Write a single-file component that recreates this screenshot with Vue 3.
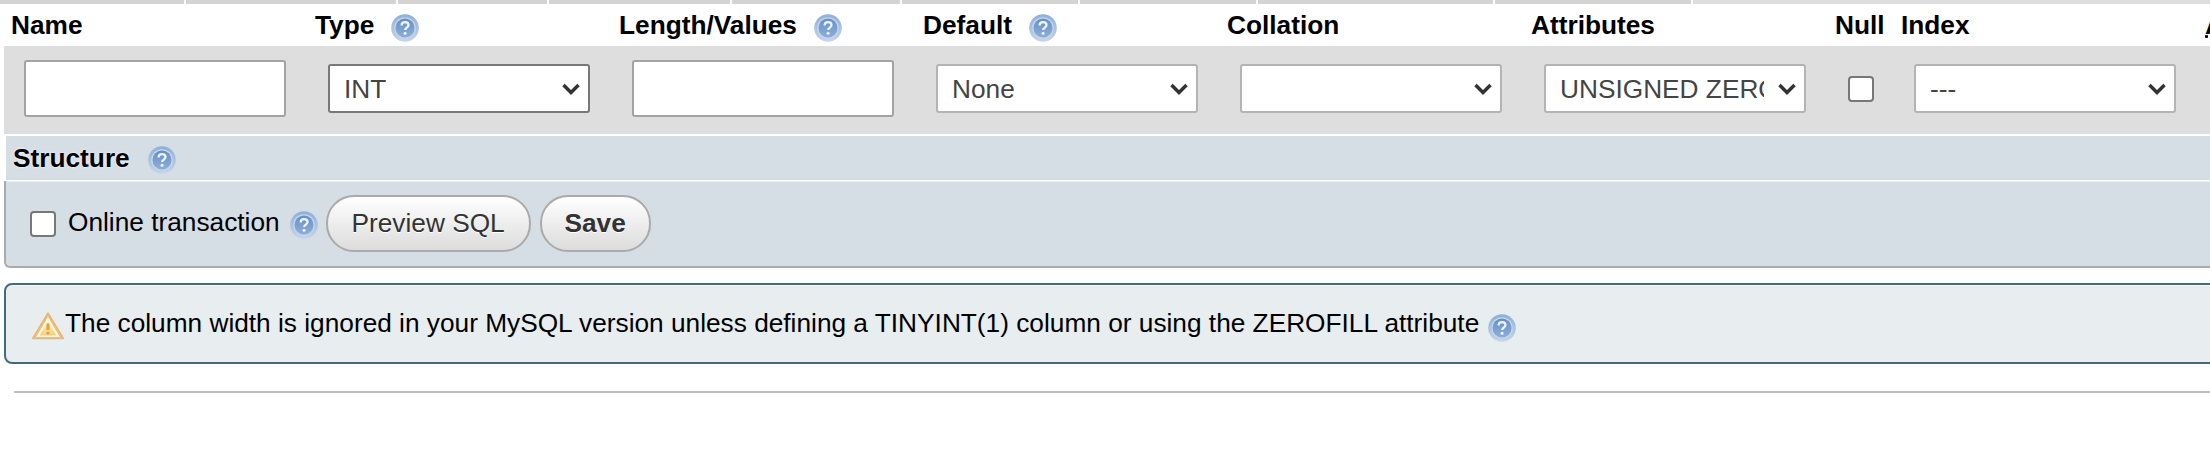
<template>
  <div class="page">
    <!-- shared help icon -->
    <svg class="icon-defs" width="0" height="0" aria-hidden="true">
      <defs>
        <linearGradient id="helpFill" x1="0" y1="0" x2="0" y2="1">
          <stop offset="0" stop-color="#6690c4" />
          <stop offset="1" stop-color="#8dafd8" />
        </linearGradient>
        <linearGradient id="helpRing" x1="0" y1="0" x2="0" y2="1">
          <stop offset="0" stop-color="#8fafd6" />
          <stop offset="1" stop-color="#c4d6eb" />
        </linearGradient>
      </defs>
      <symbol id="help" viewBox="0 0 28 28">
        <circle cx="14" cy="14" r="13.800" fill="url(#helpRing)" />
        <circle cx="14" cy="14" r="10.800" fill="#c3d5ea" />
        <circle cx="14" cy="14" r="9.500" fill="url(#helpFill)" />
        <path d="M10.600 11.400c0-2 1.500-3.200 3.500-3.200s3.400 1.100 3.400 2.900c0 2.400-3.300 2.500-3.300 4.800" fill="none" stroke="#eef3f9" stroke-width="2.300" />
        <circle cx="14.100" cy="19.300" r="1.500" fill="#eef3f9" />
      </symbol>
    </svg>

    <!-- tabs cut off at the top -->
    <div class="top-strip">
      <div v-for="w in stripWidths" :key="w" class="strip-cell" :style="{ width: w + 'px' }"></div>
      <div class="strip-rest"></div>
    </div>

    <!-- column titles -->
    <div class="columns head-row">
      <div v-for="col in headers" :key="col.title" class="head-cell">
        <span>{{ col.title }}</span>
        <svg v-if="col.help" class="help head-help"><use href="#help" /></svg>
      </div>
      <div class="head-cell"><abbr class="abbr" title="Auto Increment">A_I</abbr></div>
    </div>

    <!-- field row -->
    <div class="columns field-row">
      <div class="cell"><input class="text-input" type="text" /></div>
      <div class="cell">
        <select class="select select-focus">
          <option v-for="t in types" :key="t">{{ t }}</option>
        </select>
      </div>
      <div class="cell"><input class="text-input" type="text" /></div>
      <div class="cell">
        <select class="select"><option>None</option><option>NULL</option></select>
      </div>
      <div class="cell">
        <select class="select"><option></option><option>utf8mb4_general_ci</option></select>
      </div>
      <div class="cell">
        <select class="select"><option>UNSIGNED ZEROFILL</option><option>BINARY</option></select>
      </div>
      <div class="cell"><input class="check" type="checkbox" /></div>
      <div class="cell">
        <select class="select"><option>---</option><option>PRIMARY</option></select>
      </div>
    </div>

    <div class="structure-bar">
      <span class="structure-title">Structure</span>
      <svg class="help structure-help"><use href="#help" /></svg>
    </div>

    <div class="actions">
      <input id="online" class="check" type="checkbox" />
      <label class="online-label" for="online">Online transaction</label>
      <svg class="help"><use href="#help" /></svg>
      <button class="btn btn-preview" type="button">Preview SQL</button>
      <button class="btn btn-save" type="button">Save</button>
    </div>

    <div class="message">
      <svg class="warn" viewBox="0 0 32 28">
        <defs>
          <linearGradient id="warnFill" x1="0" y1="0" x2="0" y2="1">
            <stop offset="0" stop-color="#fbf0c4" />
            <stop offset="1" stop-color="#f3d077" />
          </linearGradient>
        </defs>
        <path d="M16 1 31.500 26.500H.5Z" fill="#ecc186" stroke="#e8b679" stroke-width="1.500" stroke-linejoin="round" />
        <path d="M16 5 27.800 25H4.200Z" fill="#fff8e2" />
        <path d="M16 9 24.500 23.500H7.500Z" fill="url(#warnFill)" />
        <path d="M16 11.500v6.500" stroke="#d3a548" stroke-width="3" />
        <circle cx="16" cy="21" r="1.600" fill="#d3a548" />
      </svg>
      <span class="message-text">The column width is ignored in your MySQL version unless defining a TINYINT(1) column or using the ZEROFILL attribute</span>
      <svg class="help message-help"><use href="#help" /></svg>
    </div>

    <hr class="divider" />
  </div>
</template>

<script setup>
// widths of the cut off tabs, separators are the gaps between them
const stripWidths = [184, 210, 149, 181, 168, 176, 176, 235, 196]

const headers = [
  { title: 'Name', help: false },
  { title: 'Type', help: true },
  { title: 'Length/Values', help: true },
  { title: 'Default', help: true },
  { title: 'Collation', help: false },
  { title: 'Attributes', help: false },
  { title: 'Null', help: false },
  { title: 'Index', help: false }
]

const types = ['INT', 'VARCHAR', 'TEXT', 'DATE']
</script>

<style>
html,
body {
  margin: 0;
  background: #fff;
}
</style>

<style scoped>
.page {
  width: 2210px;
  height: 474px;
  overflow: hidden;
  font-family: "Liberation Sans", Arial, sans-serif;
  font-size: 26.25px;
  color: #000;
}
.icon-defs {
  position: absolute;
}
.top-strip {
  display: flex;
  gap: 2px;
  height: 4px;
  background: #fff;
}
.strip-cell {
  flex: none;
  background: #d4d4d4;
}
.strip-rest {
  flex: 1;
  background: #dedede;
}
.columns {
  display: grid;
  grid-template-columns: repeat(6, 304px) 66px 304px 60px;
  margin-left: 4px;
}
.head-row {
  height: 42px;
}
.head-cell {
  display: flex;
  align-items: center;
  padding-left: 7px;
  height: 42px;
  font-weight: bold;
  white-space: nowrap;
}
.head-help {
  margin-left: 17px;
  margin-top: 5px;
}
.abbr {
  text-decoration: underline dotted;
}
.help {
  flex: none;
  width: 28px;
  height: 28px;
  filter: blur(0.5px);
}
.field-row {
  height: 88px;
  background: #dedede;
}
.cell {
  box-sizing: border-box;
  display: flex;
  align-items: center;
  padding: 0 0 3px 20px;
}
.text-input {
  box-sizing: border-box;
  width: 262px;
  height: 57px;
  border: 2px solid #a3a3a3;
  border-radius: 3px;
  background: #fff;
  outline: none;
}
.select {
  box-sizing: border-box;
  width: 262px;
  height: 49px;
  padding: 0 40px 0 14px;
  border: 2px solid #b4b4b4;
  border-radius: 3px;
  font-family: inherit;
  font-size: 26.25px;
  color: #444;
  appearance: none;
  background: #fff url("data:image/svg+xml,%3Csvg xmlns='http://www.w3.org/2000/svg' width='20' height='14'%3E%3Cpath d='M2.500 3 10 10.500 17.500 3' fill='none' stroke='%23333' stroke-width='3.500'/%3E%3C/svg%3E") no-repeat right 7px center;
}
.select-focus {
  border-color: #787878;
}
.check {
  box-sizing: border-box;
  flex: none;
  width: 26px;
  height: 26px;
  margin: 0;
  border: 2px solid #777;
  border-radius: 4px;
  background: #fff;
  appearance: none;
}
.structure-bar {
  display: flex;
  align-items: center;
  gap: 18px;
  height: 44px;
  margin: 2px 0 0 6px;
  padding-left: 7px;
  background: #d5dde5;
  font-weight: bold;
  text-shadow: 0 0 3px #fff;
}
.structure-title {
  margin-top: 1px;
}
.structure-help {
  margin-top: 4px;
}
.actions {
  box-sizing: border-box;
  display: flex;
  align-items: center;
  width: 2300px;
  height: 87px;
  margin: 1px 0 0 4px;
  padding-left: 24px;
  background: #d5dde5;
  border-left: 2px solid #aaa;
  border-bottom: 2px solid #aaa;
  border-radius: 0 0 0 6px;
  box-shadow: inset 0 1px 0 #eef1f4;
}
.online-label {
  margin: -3px 0 0 12px;
}
.actions .help {
  margin: 3px 8px 0 10px;
}
.btn {
  box-sizing: border-box;
  height: 57px;
  margin-right: 9px;
  padding: 0;
  border: 2px solid #aaa;
  border-radius: 28px;
  background: linear-gradient(#fff, #dcdcdc);
  font-family: inherit;
  font-size: 26.25px;
  color: #333;
  text-shadow: 0 1px 0 #fff;
}
.btn-preview {
  width: 205px;
}
.btn-save {
  width: 111px;
  font-weight: bold;
}
.message {
  box-sizing: border-box;
  display: flex;
  align-items: center;
  width: 2300px;
  height: 81px;
  margin: 15px 0 0 4px;
  padding-left: 26px;
  background: #e8edf0;
  border: 2px solid #446a7e;
  border-radius: 8px;
  box-shadow: inset 0 1px 0 #f6f8f9;
}
.warn {
  flex: none;
  width: 32px;
  height: 28px;
  margin-top: 5px;
  filter: blur(0.4px);
}
.message-text {
  margin: -1px 0 0 1px;
  white-space: nowrap;
}
.message-help {
  margin: 8px 0 0 9px;
}
.divider {
  height: 2px;
  margin: 27px 0 0 14px;
  border: 0;
  background: #c0c0c0;
}
</style>
